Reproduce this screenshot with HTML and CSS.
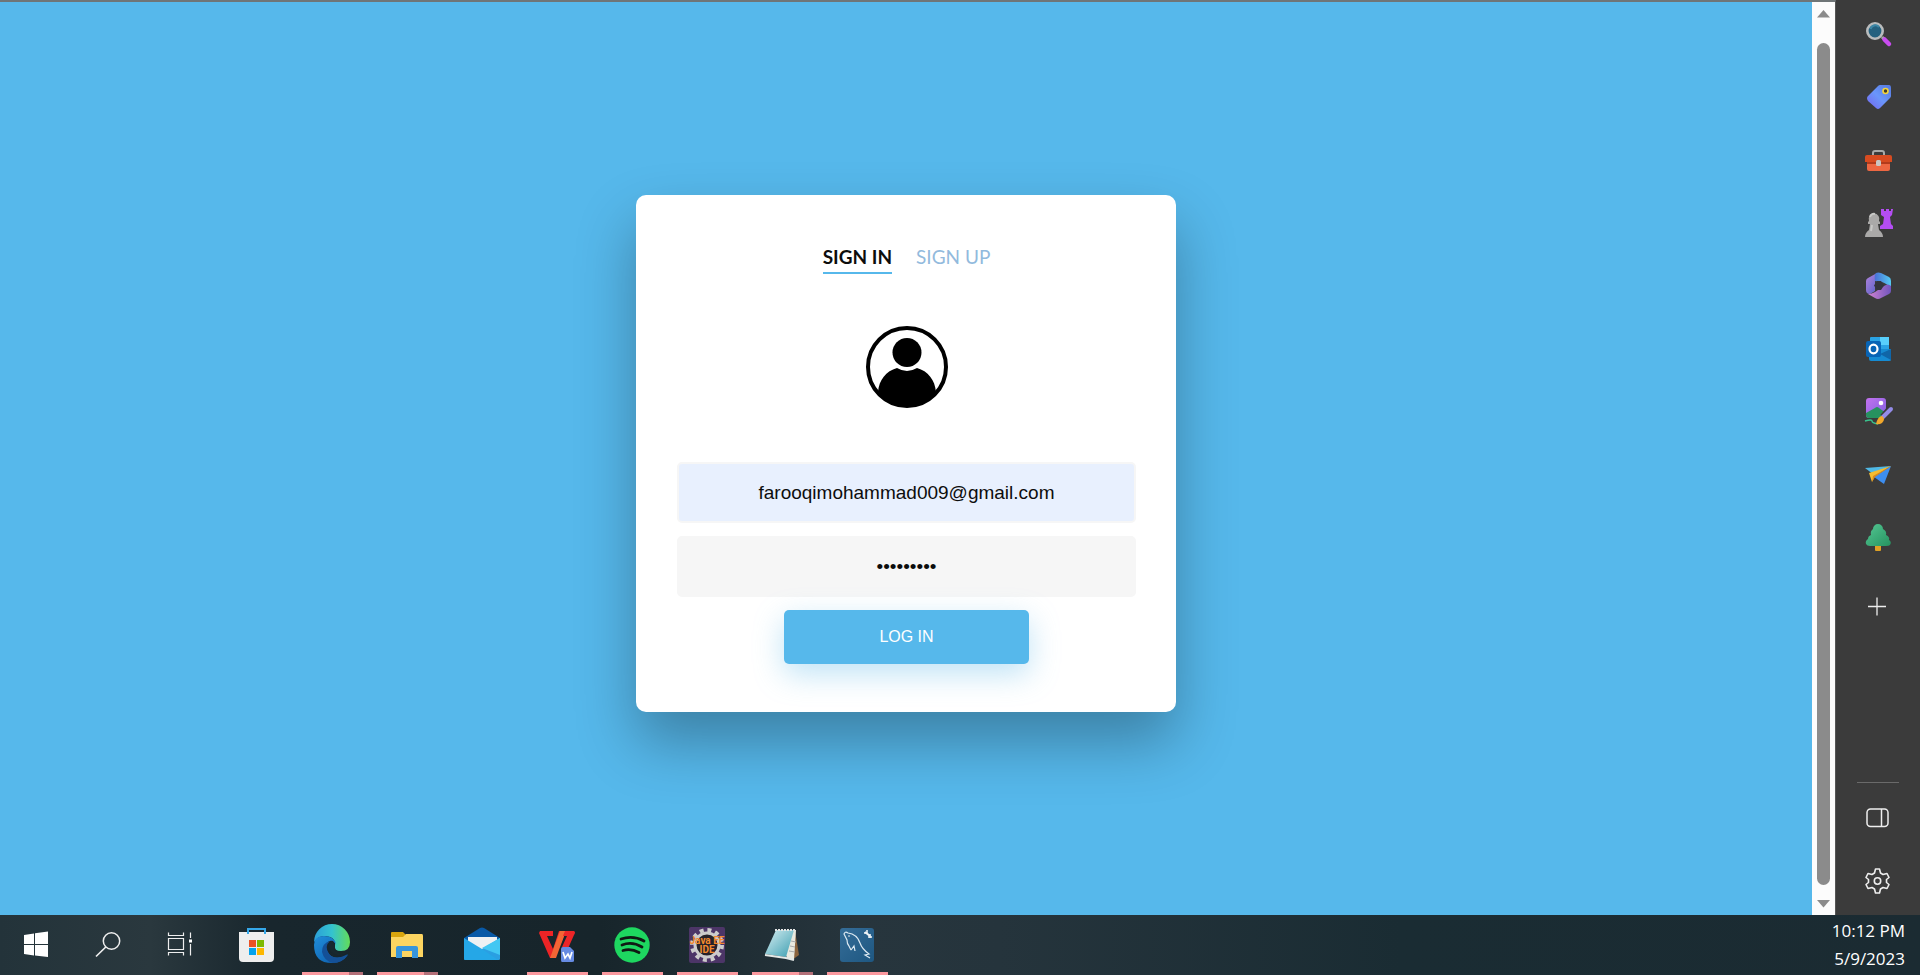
FILE: index.html
```html
<!DOCTYPE html>
<html lang="en">
<head>
<meta charset="utf-8">
<title>Sign in</title>
<link rel="stylesheet" href="styles.css">
</head>
<body>
<div class="screen">
  <div class="window">
    <main class="page">
      <section class="card">
        <nav class="tabs">
          <a class="tab tab-active" href="#signin">SIGN IN</a>
          <a class="tab" href="#signup">SIGN UP</a>
        </nav>
        <svg class="avatar" viewBox="0 0 82 82" role="img" aria-label="User">
          <defs><clipPath id="ring"><circle cx="41" cy="41" r="40"/></clipPath></defs>
          <circle cx="41" cy="41" r="39" fill="#fff" stroke="#000" stroke-width="4"/>
          <path clip-path="url(#ring)" d="M12 66C13 54 20 45 31 42Q41 48 51 42C62 45 69 54 70 66V82H12Z"/>
          <circle cx="41" cy="26.500" r="14.500"/>
        </svg>
        <form class="form">
          <input class="field field-filled" type="email" aria-label="Email" value="farooqimohammad009@gmail.com">
          <input class="field" type="password" aria-label="Password" value="123456789">
          <button class="submit" type="button">LOG IN</button>
        </form>
      </section>
    </main>
    <div class="scrollbar">
      <svg class="arrow" viewBox="0 0 14 8"><path d="M0 8L7 0L14 8Z" fill="#8b8b8b"/></svg>
      <div class="thumb"></div>
      <svg class="arrow" viewBox="0 0 14 8"><path d="M0 0L7 8L14 0Z" fill="#8b8b8b"/></svg>
    </div>
    <aside class="sidebar">
      <button class="tool" aria-label="Search"><svg class="tool-icon" viewBox="0 0 28 28">
        <path d="M17 17L20 20" stroke="#aaa" stroke-width="3"/>
        <path d="M19.500 19.500L24 24" stroke="#c94cf0" stroke-width="4.500" stroke-linecap="round"/>
        <circle cx="10" cy="11" r="7.700" fill="#24617f" stroke="#b9bcbd" stroke-width="2.600"/>
        <path d="M5.500 9A5 5 0 0 1 14 7" fill="none" stroke="#3c87a6" stroke-width="2"/>
      </svg></button>
      <button class="tool" aria-label="Shopping"><svg class="tool-icon" viewBox="0 0 28 28">
        <defs><linearGradient id="tag" x1="1" y1="0" x2="0" y2="1"><stop offset="0" stop-color="#5579df"/><stop offset=".5" stop-color="#6a96fb"/><stop offset="1" stop-color="#7564ed"/></linearGradient></defs>
        <path d="M15 2H24Q26 2 26 5V13Q26 14 25 15L15 25Q13 27 11 25L3 18Q1 15 3 13L13 3Q14 2 15 2Z" fill="url(#tag)"/>
        <circle cx="20.500" cy="8" r="2.500" fill="#413d28" stroke="#f4d43b" stroke-width="1.600"/>
      </svg></button>
      <button class="tool" aria-label="Tools"><svg class="tool-icon" viewBox="0 0 28 28">
        <path d="M8 10V7Q8 5 10 5H17Q19 5 19 7V10" fill="none" stroke="#a7a9a8" stroke-width="2"/>
        <path d="M2 15H25V23Q25 25 23 25H4Q2 25 2 23Z" fill="#ed6742"/>
        <path d="M2 9H25Q27 9 27 11V16H0V11Q0 9 2 9Z" fill="#d74b20"/>
        <path d="M2 16H25V18H2Z" fill="#b33b1c"/><rect x="11" y="14" width="5" height="6" rx="1.500" fill="#c9c6c3"/>
      </svg></button>
      <button class="tool" aria-label="Games"><svg class="tool-icon" viewBox="0 0 28 28">
        <path d="M16 0H19V2H21V0H24V2H26V0H28L27 6L25 8L26 15L28 17V20H15V17L18 15L19 8L16 6Z" fill="#b44df3"/>
        <path d="M4 12A5.400 5.400 0 1 1 14 12L15 13V15H13L14 21Q18 24 18 28H0Q0 24 4 21L5 15H3V13Z" fill="#aaa9a8"/>
        <path d="M5 8A4 4 0 0 1 10 5M6 22L7 16" fill="none" stroke="#c8c8c6" stroke-width="2"/>
      </svg></button>
      <button class="tool" aria-label="Microsoft 365"><svg class="tool-icon" viewBox="0 0 28 28">
        <defs><linearGradient id="ma" y2="1"><stop stop-color="#b383dc"/><stop offset="1" stop-color="#5360c7"/></linearGradient><linearGradient id="mb"><stop stop-color="#486fd6"/><stop offset="1" stop-color="#55caf1"/></linearGradient><linearGradient id="mc"><stop stop-color="#d082d0"/><stop offset="1" stop-color="#7155bd"/></linearGradient></defs>
        <path d="M12 1L3 6Q1 7 1 9V18Q1 22 5 22L10 19V8Q10 5 14 1Z" fill="url(#ma)"/>
        <path d="M11 1Q13 0 16 1L24 5Q26 6 26 9V17Q23 12 17 10L10 9Q9 3 11 1Z" fill="url(#mb)"/>
        <path d="M26 14V19Q26 21 24 22L16 26Q13 28 10 26L3 22Q7 22 10 20L19 14Q23 11 26 14Z" fill="url(#mc)"/>
        <path d="M12 9H16L19 13.500L16 18H12L9 13.500Z" fill="#33343d"/>
      </svg></button>
      <button class="tool" aria-label="Outlook"><svg class="tool-icon" viewBox="0 0 28 28">
        <rect x="5" y="2" width="19" height="16" rx="1" fill="#2aa3e4"/><path d="M15 2H24V10H15Z" fill="#58cffc"/><path d="M4 14H26V25Q26 26 24 26H6Q4 26 4 24Z" fill="#168bd2"/><path d="M26 14V25L15 19Z" fill="#1066a8"/>
        <rect x="1" y="6" width="15" height="16" rx="2" fill="#0864b5"/><ellipse cx="8.500" cy="14" rx="4" ry="4.300" fill="none" stroke="#fff" stroke-width="2.200"/>
      </svg></button>
      <button class="tool" aria-label="Image creator"><svg class="tool-icon" viewBox="0 0 28 28">
        <defs><linearGradient id="im" y2="1"><stop stop-color="#c272ef"/><stop offset="1" stop-color="#805fe0"/></linearGradient></defs>
        <rect x="1" y="0" width="20" height="20" rx="3" fill="url(#im)"/><path d="M1 15L10 10Q12 8 14 10L21 15V17Q21 20 18 20H4Q1 20 1 17Z" fill="#27925f"/><circle cx="16" cy="5" r="2.300" fill="#fff"/>
        <path d="M0 23Q7 21 7 23T13 26" fill="none" stroke="#3ac28d" stroke-width="1.500"/><path d="M18 19L26 10" stroke="#3b3b3b" stroke-width="7"/><path d="M18 19L26 11" stroke="#948ce8" stroke-width="4" stroke-linecap="round"/><path d="M11 26Q13 18 17 18Q21 21 17 25Q14 27 11 26Z" fill="#f1a82b"/>
      </svg></button>
      <button class="tool" aria-label="Drop"><svg class="tool-icon" viewBox="0 0 28 28">
        <path d="M0 7L26 5L8 13Z" fill="#4fb9e6"/><path d="M26 5L19 23L9 16Z" fill="#3d8ef0"/><path d="M26 5L4 12L7 21L10 15Z" fill="#f5bd30"/><path d="M7 21L8 15L26 5L10 16Z" fill="#d68a23"/>
      </svg></button>
      <button class="tool" aria-label="E-tree"><svg class="tool-icon" viewBox="0 0 28 28">
        <defs><linearGradient id="tree" y2="1"><stop stop-color="#54c793"/><stop offset="1" stop-color="#269360"/></linearGradient></defs>
        <rect x="10" y="20" width="6" height="7" rx="1" fill="#dfa125"/><path d="M8 5A5 5 0 0 1 18 5Q22 7 21 11Q25 13 24 16Q27 18 25 21Q24 22 21 22H5Q2 22 1 20Q0 17 3 15Q3 12 6 11Q5 7 8 5Z" fill="url(#tree)"/>
      </svg></button>
      <button class="tool tool-add" aria-label="Customize"><svg class="tool-icon" viewBox="0 0 28 28"><path d="M3 14.500H21M12 5.500V23.500" stroke="#eee" stroke-width="1.300"/></svg></button>
      <div class="sidebar-end">
        <button class="tool" aria-label="Hide sidebar"><svg class="tool-icon" viewBox="0 0 28 28"><rect x="2" y="5" width="21" height="17.500" rx="3.500" fill="none" stroke="#eee" stroke-width="1.500"/><path d="M16.500 5V22.500" stroke="#eee" stroke-width="1.500"/></svg></button>
        <button class="tool" aria-label="Settings"><svg class="tool-icon" viewBox="0 0 28 28"><path d="M10.500 2H14.500L15.500 6L18 7.500L22 6.500L24 10.500L21.500 12.500V15.500L24 17.500L22 21.500L18 20.500L15.500 22L14.500 26H10.500L9.500 22L7 20.500L3 21.500L1 17.500L3.500 15.500V12.500L1 10.500L3 6.500L7 7.500L9.500 6Z" fill="none" stroke="#eee" stroke-width="1.600" stroke-linejoin="round"/><circle cx="12.500" cy="14" r="3.200" fill="none" stroke="#eee" stroke-width="1.600"/></svg></button>
      </div>
    </aside>
  </div>
  <footer class="taskbar">
    <div class="system">
      <button class="system-button" aria-label="Start"><svg class="task-icon" viewBox="0 0 36 36"><path d="M6 8L16 6.500V17H6ZM17 6.300L30 4.500V17H17ZM6 18H16V28.500L6 27ZM17 18H30V30L17 28.600Z" fill="#fff"/></svg></button>
      <button class="system-button" aria-label="Search"><svg class="task-icon" viewBox="0 0 36 36"><circle cx="21.500" cy="14" r="8.200" fill="none" stroke="#eee" stroke-width="1.500"/><path d="M15.800 20L6 29.500" stroke="#eee" stroke-width="1.700"/></svg></button>
      <button class="system-button" aria-label="Task view"><svg class="task-icon" viewBox="0 0 36 36"><path d="M6.500 5.500V8.500H21.500V5.500M6.500 11.500H21.500V22.500H6.500ZM6.500 28.500V25.500H21.500V28.500M28.500 5.500V11M28.500 17V28.500" fill="none" stroke="#eee" stroke-width="1.200"/><rect x="27" y="12.500" width="3" height="3" fill="#fff"/></svg></button>
    </div>
    <div class="apps">
      <button class="app" aria-label="Store"><svg class="task-icon" viewBox="0 0 36 36"><path d="M0 5H35V31Q35 35 31 35H4Q0 35 0 31Z" fill="#eee"/><path d="M9 7V2H26V7" fill="none" stroke="#35a8ea" stroke-width="2"/><path d="M10 13H17V20H10Z" fill="#eb5226"/><path d="M18 13H25V20H18Z" fill="#7eb900"/><path d="M10 21H17V28H10Z" fill="#05a3ec"/><path d="M18 21H25V28H18Z" fill="#fdb700"/></svg></button>
      <button class="app app-open app-multi" aria-label="Edge"><svg class="task-icon" viewBox="0 0 36 36">
        <defs><linearGradient id="ea"><stop stop-color="#2b9fd9"/><stop offset=".5" stop-color="#34c3cf"/><stop offset="1" stop-color="#63dc58"/></linearGradient><linearGradient id="eb" y2="1"><stop stop-color="#208edb"/><stop offset="1" stop-color="#0b57a5"/></linearGradient></defs>
        <path d="M0 15A18 18 0 0 1 36 15Q36 24 27 24Q20 24 21 19Q22 9 10 9Q4 9 0 15Z" fill="url(#ea)"/>
        <path d="M0 18Q0 9 10 9Q20 9 22 17Q17 11 13 16Q10 21 15 27Q21 34 34 28Q28 36 18 36Q0 36 0 18Z" fill="url(#eb)"/>
        <path d="M16 14Q10 19 15 27Q21 34 34 27Q29 36 19 36Q10 34 8 25Q8 16 16 14Z" fill="#145097"/>
        <path d="M19 14Q16 13 15 17Q14 25 23 28Q29 29 34 25Q25 28 20 23Q21 19 19 14Z" fill="#18282f"/>
      </svg></button>
      <button class="app app-open app-multi" aria-label="File Explorer"><svg class="task-icon" viewBox="0 0 36 36"><path d="M2 6Q2 5 3 5H14L17 8V11H2Z" fill="#d9a50e"/><path d="M2 10H14L17 7H33Q34 7 34 9V30H2Z" fill="#fcd561"/><path d="M7 31V21Q7 19 9 19H27Q29 19 29 21V31H23V24H13V31Z" fill="#3795db"/></svg></button>
      <button class="app" aria-label="Mail"><svg class="task-icon" viewBox="0 0 36 36"><path d="M0 11L16 1Q18 0 20 1L36 11V20H0Z" fill="#0859a7"/><path d="M4 10H33V20L18 25L4 18Z" fill="#eef1f3"/><path d="M36 11V32Q36 33 35 33H1Q0 33 0 31L18 22Z" fill="#2a9fe2"/><path d="M36 11V28L18 21Z" fill="#42c7f3"/><path d="M0 11L18 22L34 33H1Q0 33 0 31Z" fill="#25a7e7"/></svg></button>
      <button class="app app-open" aria-label="WPS Office"><svg class="task-icon" viewBox="0 0 36 36"><path d="M1 4H14V9H8L14 22L20 4H27L16 31H11L0 6Z" fill="#ed2426"/><path d="M21 4H27L17 31H11Z" fill="#f36635"/><path d="M26 4H35Q37 5 35 8L27 26L23 20L28 9H24Z" fill="#ec2528"/><path d="M24 20H31L35 24V34Q35 35 33 35H23Q22 35 22 33V22Q22 20 24 20Z" fill="#668be2"/><path d="M24 25L26 31L29 27L31 31L33 25" fill="none" stroke="#fff" stroke-width="1.700"/></svg></button>
      <button class="app app-open" aria-label="Spotify"><svg class="task-icon" viewBox="0 0 36 36"><circle cx="18" cy="18" r="17.700" fill="#1ed760"/><path d="M7 12Q19 8 30 14M8 18Q18 14 28 20M9 23.500Q17 21 25 25.500" fill="none" stroke="#101914" stroke-width="2.800" stroke-linecap="round"/></svg></button>
      <button class="app app-open" aria-label="Java EE IDE"><svg class="task-icon" viewBox="0 0 36 36"><rect width="36" height="36" rx="2" fill="#4c3567"/><circle cx="18" cy="18" r="15" fill="none" stroke="#ccc" stroke-width="4" stroke-dasharray="4 3.850"/><circle cx="18" cy="18" r="12" fill="#26222a" stroke="#ccc" stroke-width="3"/><text class="badge-text" x="18" y="17" text-anchor="middle">Java EE</text><text class="badge-text" x="18" y="26" text-anchor="middle">IDE</text></svg></button>
      <button class="app app-open app-multi" aria-label="Notepad"><svg class="task-icon" viewBox="0 0 36 36"><defs><linearGradient id="note" x2="1" y2="1"><stop stop-color="#d8eff2"/><stop offset="1" stop-color="#3a9db0"/></linearGradient></defs><path d="M31 4L35 28L28 33Z" fill="#8b643d"/><path d="M12 3L32 3L30 33L23 31Z" fill="#e9e9df"/><path d="M12 3H30L22 30L1 27Z" fill="url(#note)"/><path d="M11 3H31" stroke="#e5e7e6" stroke-width="2" stroke-dasharray="2 1"/><path d="M1 28L22 31L30 33" fill="none" stroke="#e4e8e6" stroke-width="2"/><path d="M25 24L31 25M26 19L31 20M27 14L32 15" stroke="#aaa"/></svg></button>
      <button class="app app-open" aria-label="MySQL Workbench"><svg class="task-icon" viewBox="0 0 36 36"><defs><linearGradient id="sql" y2="1"><stop stop-color="#356d98"/><stop offset="1" stop-color="#1e5781"/></linearGradient></defs><rect x="1" y="1" width="34" height="34" rx="3" fill="url(#sql)"/><path d="M12 23L10 19Q8 17 8 13L5 7Q6 4 9 6Q18 7 21 16Q23 22 30 27L26 28L31 31M12 23L15 19L16 24" fill="none" stroke="#dce9f2" stroke-width="1.200"/><circle cx="10" cy="9" r=".800" fill="#fff"/><path d="M26 5L31 9" stroke="#eef3f6" stroke-width="2.200"/><path d="M25 6H28V3M29 10H33M31 7V11" fill="none" stroke="#eef3f6" stroke-width="1.500"/></svg></button>
    </div>
    <div class="clock"><span>10:12 PM</span><span>5/9/2023</span></div>
  </footer>
</div>
</body>
</html>
```

FILE: styles.css
```css
* {
  box-sizing: border-box;
}

body {
  margin: 0;
  font-family: "Liberation Sans", Arial, sans-serif;
}

button {
  margin: 0;
  padding: 0;
  border: 0;
  background: none;
  font: inherit;
}

svg {
  display: block;
  overflow: visible;
}

.screen {
  display: flex;
  flex-direction: column;
  min-height: 100vh;
}

.window {
  display: flex;
  flex: 1;
}

.page {
  flex: 1;
  display: flex;
  justify-content: center;
  align-items: flex-start;
  padding: 193px 20px 20px;
  border-top: 2px solid #6f7577;
  background: #56b8eb;
}

.card {
  flex: 0 1 540px;
  display: flex;
  flex-direction: column;
  align-items: center;
  padding: 48px 40px 48px 41px;
  border-radius: 10px;
  background: #fff;
  box-shadow: 0 30px 60px rgba(0, 0, 0, 0.3);
}

.tabs {
  display: flex;
  gap: 24px;
  font-family: Lato, sans-serif;
  font-size: 19px;
  line-height: 28px;
}

.tab {
  padding-bottom: 1px;
  border-bottom: 2px solid transparent;
  color: #92badd;
  text-decoration: none;
}

.tab-active {
  border-color: #56b8eb;
  color: #0d0d0d;
  font-weight: 700;
}

.avatar {
  width: 82px;
  margin: 52px 0 54px;
}

.form {
  display: flex;
  flex-direction: column;
  align-items: center;
  gap: 13px;
  width: 100%;
}

.field {
  width: 100%;
  height: 61px;
  padding: 0 32px;
  border: 2px solid #f6f6f6;
  border-radius: 5px;
  background: #f6f6f6;
  color: #0d0d0d;
  font-family: inherit;
  font-size: 19px;
  text-align: center;
}

.field-filled {
  background: #e8f0fe;
}

.submit {
  padding: 18px 95px;
  border-radius: 5px;
  background: #56b8eb;
  box-shadow: 0 10px 30px rgba(95, 186, 233, 0.4);
  color: #fff;
  font-size: 16px;
  line-height: 18px;
}

.scrollbar {
  display: flex;
  flex-direction: column;
  align-items: center;
  width: 24px;
  padding: 8px 0;
  border-top: 2px solid #6f7577;
  border-right: 1px solid #555;
  background: #fcfcfc;
}

.arrow {
  width: 13px;
}

.thumb {
  flex: 1;
  width: 13px;
  margin: 26px 0 15px;
  border-radius: 7px;
  background: #8b8b8b;
}

.sidebar {
  display: flex;
  flex-direction: column;
  align-items: center;
  width: 84px;
  padding-top: 2px;
  background: #3b3b3b;
}

.tool {
  display: grid;
  place-items: center;
  width: 100%;
  height: 63px;
  padding-left: 2px;
}

.tool-icon {
  width: 28px;
}

.tool-add {
  margin-top: 5px;
}

.sidebar-end {
  width: 42px;
  margin-top: auto;
  padding: 3px 0;
  border-top: 1px solid #6a6a6a;
}

.taskbar {
  display: flex;
  height: 60px;
  background: linear-gradient(90deg, #23333a, #2a383e 150px, #18262d 270px, #17252b 600px, #27353d 860px, #25343c 1000px, #1a2c33 1400px, #1b2b32);
}

.system {
  display: flex;
  margin-right: 4px;
}

.system-button {
  display: grid;
  place-items: center;
  width: 72px;
}

.task-icon {
  width: 36px;
}

.apps {
  display: flex;
  flex: 1;
}

.app {
  display: grid;
  place-items: center;
  width: 75px;
  padding-right: 2px;
}

.app-open {
  background: linear-gradient(#fb989e, #fb989e) bottom center / 61px 3px no-repeat;
}

.app-multi {
  background: linear-gradient(90deg, #fb989e 47px, #b36f78 47px) bottom center / 61px 3px no-repeat;
}

.badge-text {
  fill: #f28a2d;
  font-family: Roboto, sans-serif;
  font-size: 10px;
  font-weight: 700;
}

.clock {
  display: flex;
  flex-direction: column;
  align-items: flex-end;
  padding: 2px 15px 0;
  color: #fff;
  font-family: "Open Sans", sans-serif;
  font-size: 17px;
  line-height: 28px;
}
```
